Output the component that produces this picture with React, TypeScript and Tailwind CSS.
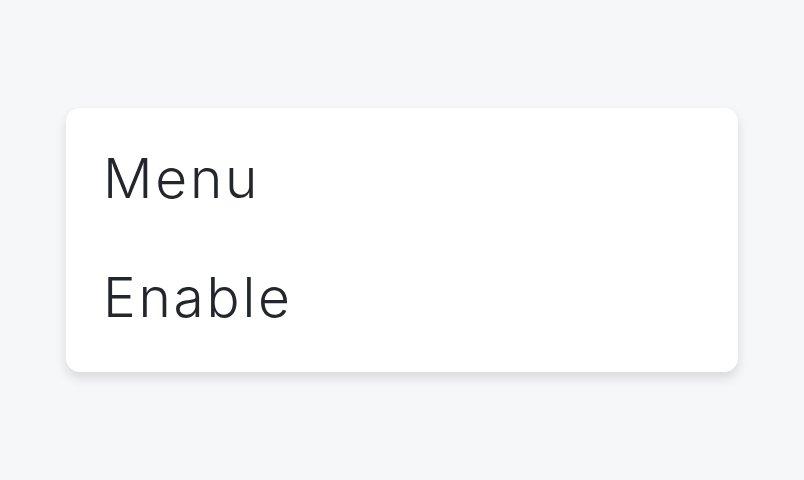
import React from 'react'

export default function App() {
  const items = ['Menu', 'Enable']
  return (
    <div className="w-[804px] h-[480px] bg-[#f6f7f9] pt-[108px] pl-[66px]" style={{ fontFamily: 'Inter, sans-serif' }}>
      <div className="w-[672px] h-[264px] bg-white rounded-[14px] shadow-[0_6px_12px_rgba(0,0,0,0.12)] flex flex-col gap-[35px] pt-[28px] pl-[37px]">
        {items.map((label) => (
          <div key={label} className="text-[55px] font-light leading-[84px] tracking-[0.05em] text-[#23272d]">
            {label}
          </div>
        ))}
      </div>
    </div>
  )
}
